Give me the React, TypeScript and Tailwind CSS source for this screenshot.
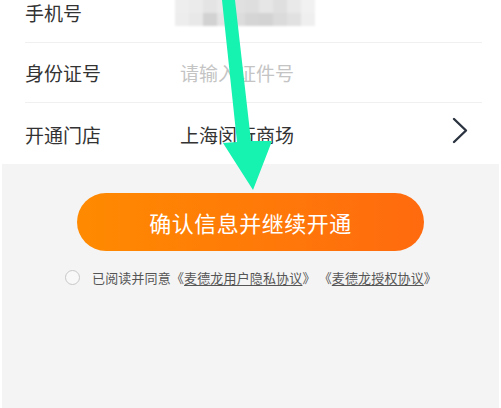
import React from "react";

const font = { fontFamily: '"Noto Sans CJK SC", "Noto Sans", sans-serif' };

const mosaicTop = ["#eeeeee", "#ebebeb", "#e4e4e4", "#e9e9e9", "#e0e0e0", "#dedede", "#e6e6e6", "#dfdfdf", "#e9e9e9", "#f1f1f1"];
const mosaicBottom = ["#ededed", "#e8e8e8", "#d2d2d2", "#e4e4e4", "#dcdcdc", "#d5d5d5", "#d3d3d3", "#dbdbdb", "#e1e1e1", "#efefef"];

function Mosaic() {
  return (
    <div className="flex flex-col blur-[1.2px] -mt-[2px]">
      <div className="flex">
        {mosaicTop.map((c, i) => (
          <div key={i} className="w-[14px] h-[15px]" style={{ background: c }} />
        ))}
      </div>
      <div className="flex">
        {mosaicBottom.map((c, i) => (
          <div key={i} className="w-[14px] h-[13px]" style={{ background: c }} />
        ))}
      </div>
    </div>
  );
}

export default function App() {
  return (
    <div className="relative w-[501px] h-[408px] overflow-hidden bg-white" style={font}>
      <div className="flex flex-col h-full">
        <div className="bg-white -mt-[17px]">
          <div className="ml-[25px] mr-[19px] h-[60px] border-b border-[#f0f0f0] flex items-center">
            <span className="w-[150px] text-[19px] text-[#333333] leading-none">手机号</span>
            <Mosaic />
          </div>
          <div className="ml-[25px] mr-[19px] h-[60px] border-b border-[#f0f0f0] flex items-center">
            <span className="w-[155px] text-[19px] text-[#333333] leading-none">身份证号</span>
            <span className="text-[19px] text-[#c4c4c4] leading-none">请输入证件号</span>
          </div>
          <div className="ml-[25px] mr-[19px] h-[61px] flex items-center">
            <span className="w-[155px] text-[19px] text-[#333333] leading-none mt-[2px]">开通门店</span>
            <span className="flex-1 text-[19px] text-[#333333] leading-none mt-[2px]">上海闵行商场</span>
            <svg width="16" height="28" viewBox="0 0 16 28" className="mr-[14px] -mt-[6px]">
              <polyline points="2,2 14,13.5 2,25" fill="none" stroke="#2b3340" strokeWidth="2.4" strokeLinecap="round" strokeLinejoin="round" />
            </svg>
          </div>
        </div>
        <div className="flex-1 bg-[#f4f4f4] mx-[2px] flex flex-col items-center">
          <button className="mt-[29px] w-[347px] h-[58px] rounded-full bg-gradient-to-r from-[#ff8a00] to-[#ff6a0e] text-white text-[22px] leading-none flex items-center justify-center tracking-[0.5px]">
            确认信息并继续开通
          </button>
          <div className="mt-[19px] flex items-center self-start ml-[63px]">
            <span className="w-[15px] h-[15px] rounded-full border border-[#c8c8c8] bg-white/40" />
            <span className="ml-[12px] text-[13px] tracking-[0.15px] text-[#555555] leading-none">
              已阅读并同意《<span className="underline underline-offset-2">麦德龙用户隐私协议</span>》 《<span className="underline underline-offset-2">麦德龙授权协议</span>》
            </span>
          </div>
        </div>
      </div>
      <svg className="absolute inset-0 pointer-events-none" width="501" height="408" viewBox="0 0 501 408">
        <polygon
          points="222,0 235,0 251,141 272,141 253,190 223,143 237,142"
          fill="#16f2b0"
        />
      </svg>
    </div>
  );
}
